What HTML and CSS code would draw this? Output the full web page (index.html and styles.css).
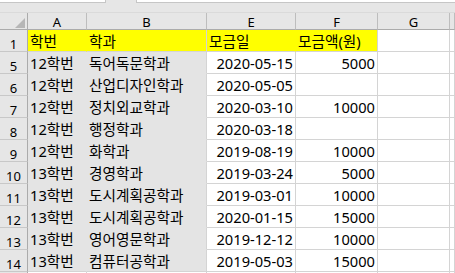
FILE: index.html
```html
<!DOCTYPE html>
<html lang="ko">
<head>
<meta charset="utf-8">
<title>Sheet</title>
<link rel="stylesheet" href="styles.css">
</head>
<body>
<div class="app">
  <div class="topbar">
    <div class="namebox"></div>
    <div class="fx"></div>
  </div>
  <div class="sheet">
    <div class="cell corner"><svg class="tri" width="10" height="10" viewBox="0 0 10 10"><polygon points="10,0 10,10 0,10" fill="#b6b6b6"/></svg></div>
    <div class="cell colh">A</div>
    <div class="cell colh">B</div>
    <div class="cell colh">E</div>
    <div class="cell colh">F</div>
    <div class="cell colh">G</div>
    <div class="cell colh"></div>

    <div class="cell rowh">1</div>
    <div class="cell y join">학번</div>
    <div class="cell y">학과</div>
    <div class="cell y join">모금일</div>
    <div class="cell y">모금액(원)</div>
    <div class="cell w"></div>
    <div class="cell w"></div>

    <div class="cell rowh">5</div>
    <div class="cell sel a">12학번</div>
    <div class="cell sel b">독어독문학과</div>
    <div class="cell w num">2020-05-15</div>
    <div class="cell w num">5000</div>
    <div class="cell w"></div>
    <div class="cell w"></div>

    <div class="cell rowh">6</div>
    <div class="cell sel a">12학번</div>
    <div class="cell sel b">산업디자인학과</div>
    <div class="cell w num">2020-05-05</div>
    <div class="cell w num"></div>
    <div class="cell w"></div>
    <div class="cell w"></div>

    <div class="cell rowh">7</div>
    <div class="cell sel a">12학번</div>
    <div class="cell sel b">정치외교학과</div>
    <div class="cell w num">2020-03-10</div>
    <div class="cell w num">10000</div>
    <div class="cell w"></div>
    <div class="cell w"></div>

    <div class="cell rowh">8</div>
    <div class="cell sel a">12학번</div>
    <div class="cell sel b">행정학과</div>
    <div class="cell w num">2020-03-18</div>
    <div class="cell w num"></div>
    <div class="cell w"></div>
    <div class="cell w"></div>

    <div class="cell rowh">9</div>
    <div class="cell sel a">12학번</div>
    <div class="cell sel b">화학과</div>
    <div class="cell w num">2019-08-19</div>
    <div class="cell w num">10000</div>
    <div class="cell w"></div>
    <div class="cell w"></div>

    <div class="cell rowh">10</div>
    <div class="cell sel a">13학번</div>
    <div class="cell sel b">경영학과</div>
    <div class="cell w num">2019-03-24</div>
    <div class="cell w num">5000</div>
    <div class="cell w"></div>
    <div class="cell w"></div>

    <div class="cell rowh">11</div>
    <div class="cell sel a">13학번</div>
    <div class="cell sel b">도시계획공학과</div>
    <div class="cell w num">2019-03-01</div>
    <div class="cell w num">10000</div>
    <div class="cell w"></div>
    <div class="cell w"></div>

    <div class="cell rowh">12</div>
    <div class="cell sel a">13학번</div>
    <div class="cell sel b">도시계획공학과</div>
    <div class="cell w num">2020-01-15</div>
    <div class="cell w num">15000</div>
    <div class="cell w"></div>
    <div class="cell w"></div>

    <div class="cell rowh">13</div>
    <div class="cell sel a">13학번</div>
    <div class="cell sel b">영어영문학과</div>
    <div class="cell w num">2019-12-12</div>
    <div class="cell w num">10000</div>
    <div class="cell w"></div>
    <div class="cell w"></div>

    <div class="cell rowh">14</div>
    <div class="cell sel a last">13학번</div>
    <div class="cell sel b last">컴퓨터공학과</div>
    <div class="cell w num">2019-05-03</div>
    <div class="cell w num">15000</div>
    <div class="cell w"></div>
    <div class="cell w"></div>

    <div class="cell rowh"></div>
    <div class="cell w"></div>
    <div class="cell w"></div>
    <div class="cell w"></div>
    <div class="cell w"></div>
    <div class="cell w"></div>
    <div class="cell w"></div>
  </div>
</div>
</body>
</html>
```

FILE: styles.css
```css
html, body {
  margin: 0;
  padding: 0;
  background: #e6e6e6;
  overflow: hidden;
}

.app {
  width: 455px;
  height: 273px;
  overflow: hidden;
  background: #e6e6e6;
  font-family: "Noto Sans", "Noto Sans CJK KR", sans-serif;
  color: #000;
}

.topbar {
  height: 12px;
  display: flex;
  align-items: flex-start;
}

.namebox {
  width: 105px;
  height: 2px;
  background: #fff;
  border-right: 1px solid #c6c6c6;
  border-bottom: 1px solid #c6c6c6;
}

.fx {
  margin-left: 30px;
  flex: 1;
  height: 2px;
  background: #fff;
  border-left: 1px solid #c6c6c6;
  border-bottom: 1px solid #c6c6c6;
}

.sheet {
  display: grid;
  grid-template-columns: 28px 59px 120px 89px 82px 72px 1fr;
  grid-template-rows: 17px;
  grid-auto-rows: 22px;
  border-top: 1px solid #dadada;
}

.cell {
  box-sizing: border-box;
  display: flex;
  align-items: flex-end;
  border-right: 1px solid #d4d4d4;
  border-bottom: 1px solid #d4d4d4;
  padding: 0 2px 2px 2px;
  font-size: 14.67px;
  line-height: 1;
  white-space: nowrap;
  overflow: hidden;
}

.corner {
  background: #e6e6e6;
  border-right-color: #ababab;
  border-bottom-color: #ababab;
  justify-content: flex-end;
  padding: 0 2px 1px 0;
}

.tri {
  display: block;
}

.colh {
  background: #e6e6e6;
  border-right-color: #bdbdbd;
  border-bottom-color: #ababab;
  justify-content: center;
  font-size: 13px;
  line-height: 13px;
  padding: 0;
}

.rowh {
  background: #e6e6e6;
  border-right-color: #ababab;
  border-bottom-color: #c8c8c8;
  justify-content: center;
  font-size: 13px;
  line-height: 13px;
  padding: 0;
}

.y {
  background: #ffff00;
}

.y.join {
  border-right-color: #ffff00;
}

.sel {
  background: #e4e4e4;
  border-bottom-color: #e4e4e4;
}

.sel.a {
  border-right-color: #e4e4e4;
}

.sel.last {
  border-bottom-color: #d4d4d4;
}

.w {
  background: #fff;
}

.num {
  justify-content: flex-end;
}
```
